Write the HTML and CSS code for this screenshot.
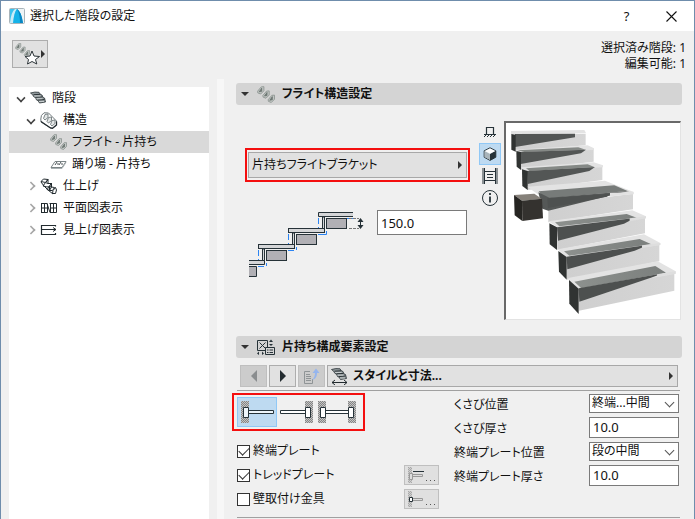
FILE: index.html
```html
<!DOCTYPE html>
<html lang="ja">
<head>
    <meta charset="UTF-8">
    <meta name="viewport" content="width=device-width, initial-scale=1.0">
    <title>選択した階段の設定</title>
    <link rel="stylesheet" href="styles.css">
</head>
<body>
    <!-- 共通アイコン -->
    <svg class="defs" width="0" height="0" aria-hidden="true">
        <defs>
            <pattern id="wall" width="2" height="2" patternUnits="userSpaceOnUse">
                <rect width="2" height="2" fill="#c4c4c4"/>
                <path d="M0 1H1V2H0zM1 0H2V1H1z" fill="#858585"/>
            </pattern>
            <symbol id="flight" viewBox="0 0 17 16">
                <g fill="#c3c8c5" stroke="#8b9390" stroke-width=".8">
                    <path d="M.5 5L4 .8 6.500 .6 6.500 4.500 3.500 7.500 .8 6.500z"/>
                    <path d="M5.500 9L9 4.800 11.500 4.600 11.500 8.500 8.500 11.500 5.800 10.500z"/>
                    <path d="M10.500 13L14 8.800 16.500 8.600 16.500 12.500 13.500 15.500 10.800 14.500z"/>
                </g>
                <path d="M2 5.500L4.500 2V5zM7 9.500L9.500 6V9zM12 13.500L14.500 10V13z" fill="#77817d" stroke="#5d6763" stroke-width=".6"/>
            </symbol>
            <symbol id="stairs" viewBox="0 0 16 12">
                <path d="M.5 1.500Q5 0 9 .8L10.500 3 12 3.500 13 6 14.500 6.500 15.500 10.500 9.500 11.500 8 9 6.500 8.500 5.500 6 4 5.500Q3 3 .5 1.500z" fill="#90989b" stroke="#2b3337" stroke-width=".8"/>
                <path d="M3.500 3.200L10.300 2.800M5.500 5.800L12.500 5.400M7.800 8.600L14.500 8" stroke="#2b3337"/>
                <path d="M4.200 4.500H10.500M6.500 7.200H12.500M9 10H14" stroke="#d5dada" stroke-width=".8"/>
            </symbol>
        </defs>
    </svg>

    <div class="window">
        <header class="titlebar">
            <svg class="app-icon" width="16" height="16" viewBox="0 0 16 16">
                <rect x=".5" y=".5" width="15" height="15" rx="1" fill="#eef4f6" stroke="#a9b4ba"/>
                <path d="M1 1H9Q5 6 4 15H1z" fill="#3cc3ee"/>
                <path d="M1 15Q2 4 6 1H8Q5 6 4.500 15z" fill="#c9ecf8"/>
                <path d="M4 15Q5 4 8 1Q12 3 14 15z" fill="#14b2e8"/>
                <path d="M8 1Q12 3 14 15H11Q11 6 8 1z" fill="#0a86c2"/>
            </svg>
            <h1>選択した階段の設定</h1>
            <button type="button" class="win-btn" aria-label="ヘルプ">?</button>
            <button type="button" class="win-btn" aria-label="閉じる">
                <svg width="11" height="11" viewBox="0 0 11 11"><path d="M.5 .5L10.500 10.500M10.500 .5L.5 10.500" stroke="#111" stroke-width="1.100"/></svg>
            </button>
        </header>

        <div class="toolbar">
            <button type="button" class="favorite" aria-label="お気に入り">
                <svg width="32" height="24" viewBox="0 0 32 24">
                    <use href="#flight" x="1" y="1" width="15" height="14"/>
                    <path d="M18 9L20 14 25.500 14.500 21.500 17.500 22.800 22 18 19.500 13.500 22 14.500 17.500 11 14.500 16 14z" fill="#fff" stroke="#2b3337"/>
                    <path d="M27 8V16L31 12z" fill="#333"/>
                </svg>
            </button>
            <div class="counts">
                <div>選択済み階段: 1</div>
                <div>編集可能: 1</div>
            </div>
        </div>

        <div class="content">
            <nav class="sidebar">
                <ul class="tree">
                    <li class="level-1">
                        <span class="chevron open"></span>
                        <svg class="icon" width="17" height="14"><use href="#stairs" width="16" height="13"/></svg>
                        階段
                    </li>
                    <li class="level-2">
                        <span class="chevron open"></span>
                        <svg class="icon" width="18" height="17" viewBox="0 0 18 17">
                            <path d="M.8 7Q.5 3 4 .8L8.500 1 16.500 9V13L12.500 16.300 10.500 16 1 10z" fill="#fff" stroke="#6f787b"/>
                            <path d="M1 9.500L10.500 16 12.500 16.300 16.500 13V9.500" fill="none" stroke="#222b2f" stroke-width="1.300"/>
                            <path d="M3.500 6.500L5 2.500 8 2 8 5.500 5 8zM7 9.500L8.500 5.500 11.500 5 11.500 8.500 8.500 11zM10.500 12.500L12 8.500 15 8 15 11.500 12 14z" fill="#e4e7e7" stroke="#707a7d" stroke-width=".9"/>
                        </svg>
                        構造
                    </li>
                    <li class="level-3 selected">
                        <svg class="icon" width="17" height="16"><use href="#flight" width="17" height="16"/></svg>
                        フライト - 片持ち
                    </li>
                    <li class="level-3">
                        <svg class="icon" width="17" height="16" viewBox="0 0 17 16">
                            <path d="M1 11.500L5 5.500H16L12 11.500z" fill="#fff" stroke="#7b8486"/>
                            <path d="M5 9L7 6M9 9L11 6M7 8H9M11 8H13" stroke="#4c5558" fill="none"/>
                            <path d="M1 12.500H12L16 6.500" stroke="#aab1b3" fill="none"/>
                        </svg>
                        踊り場 - 片持ち
                    </li>
                    <li class="level-2">
                        <span class="chevron"></span>
                        <svg class="icon" width="18" height="17" viewBox="0 0 18 17">
                            <g fill="#fff" stroke="#222b2f">
                                <path d="M1 3.500L3.500 1 8 1.500 5.500 4.500zM5.500 4.500L8 1.500V5.500L5.500 8.500z"/>
                                <path d="M3 8L5.500 4.500 8 5.500 11 5.500 9.500 8.500 7 9z"/>
                                <path d="M9.500 8.500L11.500 5V9L9.500 12.500zM7 11.500L9.500 8.500 11.500 9 14.500 9.500 12.500 12.500 9.500 12.500z"/>
                                <path d="M13 12.500L15.500 9.500 16.500 12 15.500 15.500 12.500 15.500z"/>
                            </g>
                            <path d="M1 4L4 8M4 8L8 12M8 12L13 16" stroke="#222b2f"/>
                        </svg>
                        仕上げ
                    </li>
                    <li class="level-2">
                        <span class="chevron"></span>
                        <svg class="icon" width="18" height="16" viewBox="0 0 18 16">
                            <path d="M1.500 3V13M4.500 3V13M1 3.500H7L10 12.500H16.500V3.500H9.500M1 12.500H7.500V3.500M10.500 3V12M13.500 3V13M1 8H8M10 8H17" fill="none" stroke="#222b2f"/>
                        </svg>
                        平面図表示
                    </li>
                    <li class="level-2">
                        <span class="chevron"></span>
                        <svg class="icon" width="18" height="16" viewBox="0 0 18 16">
                            <path d="M16 3.500H1.500V12.500H16M1 7.500H16M15.500 3V4.500M15.500 11V13" fill="none" stroke="#222b2f" stroke-width="1.200"/>
                            <path d="M13 5.500L16 7.500 13 9.500" fill="none" stroke="#222b2f"/>
                        </svg>
                        見上げ図表示
                    </li>
                </ul>
            </nav>
            <div class="splitter"></div>

            <main class="settings">
                <h2 class="section-head">
                    <span class="collapse"></span>
                    <svg class="icon" width="18" height="17"><use href="#flight" width="18" height="17"/></svg>
                    フライト構造設定
                </h2>

                <div class="structure">
                    <div class="structure-form">
                        <div class="highlight bracket">
                            <button type="button" class="popup">片持ちフライトブラケット<span class="arrow"></span></button>
                        </div>
                        <div class="thickness">
                            <svg width="116" height="68" viewBox="0 0 116 68">
                                <g fill="none" stroke="#2c84f2" stroke-dasharray="6 3">
                                    <path d="M69.500 6V20M75 22.500H77.500V18M39.500 22V36M9.500 38V52M98 6.500H104"/>
                                    <path d="M69 22.500H77M39 38.500H47.500V35M9 54.500H17.500V51"/>
                                </g>
                                <g fill="#b1b0b5" stroke="#263238">
                                    <rect x="77.500" y="6.500" width="20" height="10"/>
                                    <rect x="47.500" y="22.500" width="20" height="10"/>
                                    <rect x="17.500" y="38.500" width="20" height="10"/>
                                    <path d="M0 54.500H7.500V64.500H0"/>
                                </g>
                                <g fill="#d5d6d8" stroke="#263238">
                                    <path d="M73.500 5V17H75.500V5zM43.500 21V33H45.500V21zM13.500 37V49H15.500V37z"/>
                                    <path d="M104 .5H69.500V4.500H104"/>
                                    <rect x="39.500" y="16.500" width="36" height="4"/>
                                    <rect x="9.500" y="32.500" width="36" height="4"/>
                                    <path d="M0 48.500H15.500V52.500H0"/>
                                </g>
                                <path d="M100 6.500H110M100 16.500H110" stroke="#777" stroke-dasharray="3 1"/>
                                <path d="M111.500 7V16" stroke="#263238"/>
                                <path d="M108.500 10L111.500 6 114.500 10zM108.500 13L111.500 17 114.500 13z" fill="#263238"/>
                            </svg>
                            <input type="text" class="field" value="150.0" aria-label="厚さ">
                        </div>
                    </div>

                    <div class="view-tools">
                        <button type="button" aria-label="側面">
                            <svg width="14" height="14" viewBox="0 0 14 14"><path d="M1 9.500H13M3.500 9V2.500H10.500V9" fill="none" stroke="#263238" stroke-width="1.200"/><path d="M1 12L3 10M4 12L6 10M7 12L9 10M10 12L12 10" stroke="#263238"/></svg>
                        </button>
                        <button type="button" class="active" aria-label="3D">
                            <svg width="14" height="14" viewBox="0 0 14 14"><path d="M7 .8L12.800 3.800V10.200L7 13.400 1.200 10.200V3.800z" fill="#d9e0e4" stroke="#263238"/><path d="M7 7L12.800 3.800V10.200L7 13.400z" fill="#263238"/><path d="M1.500 4L7 7V13L1.500 10z" fill="#a9b4ba"/><path d="M2 4L7 1.500 12 4 7 6.500z" fill="#fff"/></svg>
                        </button>
                        <button type="button" aria-label="寸法">
                            <svg width="16" height="16" viewBox="0 0 16 16"><path d="M1 .5V15.500M15 .5V15.500" stroke="#263238" stroke-width="2" stroke-dasharray="1 1"/><path d="M2.500 0V16M13.500 0V16M2 3.500H14M2 12.500H14M5 6.500H11M5 9.500H11" stroke="#263238"/></svg>
                        </button>
                        <button type="button" aria-label="情報">
                            <svg width="18" height="18" viewBox="0 0 18 18"><circle cx="9" cy="9" r="7.500" fill="none" stroke="#263238"/><path d="M9 7.500V13.500M9 4V6" stroke="#263238" stroke-width="1.800"/></svg>
                        </button>
                    </div>

                    <div class="preview">
                        <svg viewBox="108 39 519 588" role="img" aria-label="階段の3Dプレビュー">
                            <defs>
                                <linearGradient id="riser"><stop offset="0" stop-color="#cfcfcf"/><stop offset="1" stop-color="#d6d6d6"/></linearGradient>
                                <linearGradient id="glass"><stop offset="0" stop-color="#8d918e"/><stop offset="1" stop-color="#7b7f7d"/></linearGradient>
                            </defs>
                            <!-- 段 1 -->
                            <path d="M133 68L344 68V103L133 122z" fill="url(#riser)"/>
                            <path d="M120 60L340 57 345 66 120 69z" fill="#e3e3e3"/>
                            <path d="M132 69L312 68V79L132 108z" fill="#535655"/>
                            <path d="M121 69L134 71V122L121 116z" fill="#303332"/>
                            <!-- 段 2 -->
                            <path d="M150 119L368 115V152L150 177z" fill="url(#riser)"/>
                            <path d="M134 116L350 103 369 112 369 117 140 123z" fill="#e3e3e3"/>
                            <path d="M140 118L322 109 344 116 160 123z" fill="#858986"/>
                            <path d="M148 123L345 116 330 127 149 159z" fill="#535655"/>
                            <path d="M136 120L150 123V177L137 167z" fill="#303332"/>
                            <!-- 段 3 -->
                            <path d="M168 176L394 166V207L168 237z" fill="url(#riser)"/>
                            <path d="M150 169L368 154 396 163 396 169 160 181z" fill="#e3e3e3"/>
                            <path d="M165 172L350 160 370 168 176 180z" fill="#858986"/>
                            <path d="M168 180L372 168 355 180 170 219z" fill="#535655"/>
                            <path d="M153 175L170 180V237L154 225z" fill="#303332"/>
                            <!-- 踊り場 -->
                            <path d="M232 280L486 248V295L232 334z" fill="url(#riser)"/>
                            <path d="M169 227L402 209 488 243 488 250 228 269z" fill="#e3e3e3"/>
                            <path d="M203 241L430 223 470 240 219 263z" fill="#777b79"/>
                            <path d="M202 244L235 260 475 240 415 254 232 299 214 293z" fill="#555857"/>
                            <path d="M229 262L414 249 408 257 231 291z" fill="#4e5150"/>
                            <path d="M417 246L487 242V249L417 256z" fill="#e2e2e2"/>
                            <path d="M129 252L190 248 213 264 153 269z" fill="#86817a"/>
                            <path d="M129 252L153 269 154 330 131 313z" fill="#262522"/>
                            <path d="M153 269L213 263 216 322 154 330z" fill="#34322f"/>
                            <!-- 段 5 -->
                            <path d="M258 349L522 319V367L259 417z" fill="url(#riser)"/>
                            <path d="M232 331L484 298 525 316 525 322 260 349z" fill="#e3e3e3"/>
                            <path d="M252 334L467 309 497 320 265 346z" fill="url(#glass)"/>
                            <path d="M258 349L491 321 459 338 261 389z" fill="#4d504f"/>
                            <path d="M235 337L258 349V417L236 400z" fill="#303332"/>
                            <path d="M476 322L525 316V322L476 331z" fill="#dedede"/>
                            <!-- 段 6 -->
                            <path d="M287 440L565 399V451L288 506z" fill="url(#riser)"/>
                            <path d="M260 415L519 370 568 396 568 402 289 440z" fill="#e3e3e3"/>
                            <path d="M279 421L506 384 541 400 295 434z" fill="url(#glass)"/>
                            <path d="M287 437L533 401 491 419 289 475z" fill="#4d504f"/>
                            <path d="M262 420L287 438V506L264 482z" fill="#303332"/>
                            <path d="M513 403L568 396V402L513 411z" fill="#dedede"/>
                            <!-- 段 7 -->
                            <path d="M323 541L610 486V539L324 599z" fill="url(#riser)"/>
                            <path d="M291 501L560 451 614 481 614 488 323 540z" fill="#e3e3e3"/>
                            <path d="M310 512L553 465 585 485 331 532z" fill="url(#glass)"/>
                            <path d="M323 532L577 487 544 499 325 572z" fill="#4d504f"/>
                            <path d="M294 507L323 533V609L295 578z" fill="#303332"/>
                            <path d="M558 490L614 481V488L558 497z" fill="#dedede"/>
                        </svg>
                    </div>
                </div>

                <h2 class="section-head">
                    <span class="collapse"></span>
                    <svg class="icon" width="18" height="17" viewBox="0 0 18 17">
                        <path d="M.5 1.500H10.500V11.500H.5zM2.500 3.500L8.500 9.500M8.500 3.500L2.500 9.500" fill="none" stroke="#263238"/>
                        <path d="M8.500 8.500H17.500V15.500H8.500z" fill="#d4d4d4" stroke="#263238"/>
                        <path d="M10 11H11.500M12.500 11H16M10 13.500H11.500M12.500 13.500H16" stroke="#263238"/>
                        <path d="M12 3L14 .5 16 3zM12 5L14 7 16 5zM2 12.500L0 14.500 2 16zM5 12.500L7 14.500 5 16z" fill="#263238"/>
                    </svg>
                    片持ち構成要素設定
                </h2>

                <div class="pager">
                    <button type="button" class="page-btn" disabled aria-label="前へ"><svg width="8" height="12" viewBox="0 0 8 12"><path d="M7 0V12L1 6z" fill="#8a8d8f"/></svg></button>
                    <button type="button" class="page-btn" aria-label="次へ"><svg width="8" height="12" viewBox="0 0 8 12"><path d="M1 0V12L7 6z" fill="#222b2f"/></svg></button>
                    <button type="button" class="page-btn" disabled aria-label="転送">
                        <svg width="17" height="16" viewBox="0 0 17 16"><path d="M7 3.500H1.500V15.500H9.500V11M3 6.500H7M3 8.500H8M3 10.500H8M3 12.500H8" fill="none" stroke="#8f9496"/><path d="M9 12C13 11 14 8 14 5H16.500L13 .5 9.500 5H12C12 8 11 10 9 12z" fill="#95b5ee"/></svg>
                    </button>
                    <button type="button" class="popup style-popup">
                        <svg width="17" height="17" viewBox="0 0 17 17"><use href="#stairs" width="16" height="12"/><path d="M1 14.500H16M4 12L1 14.500 4 17M13 12L16 14.500 13 17" fill="none" stroke="#222b2f"/></svg>
                        スタイルと寸法...<span class="arrow"></span>
                    </button>
                </div>

                <div class="details">
                    <div class="details-left">
                        <div class="highlight placement">
                            <button type="button" class="active" aria-label="始端">
                                <svg width="38" height="28" viewBox="0 0 38 28"><path d="M3 3H11V9H3zM3 19H11V25H3zM3 9H5V19H3z" fill="url(#wall)"/><path d="M5.500 9.500H10.500V19.500H5.500zM10.500 12.500H35.500V15.500H10.500z" fill="#eef5fa" stroke="#263238"/></svg>
                            </button>
                            <button type="button" aria-label="終端">
                                <svg width="38" height="28" viewBox="0 0 38 28"><path d="M27 3H35V9H27zM27 19H35V25H27zM33 9H35V19H33z" fill="url(#wall)"/><path d="M27.500 9.500H32.500V19.500H27.500zM2.500 12.500H27.500V15.500H2.500z" fill="#fff" stroke="#263238"/></svg>
                            </button>
                            <button type="button" aria-label="両端">
                                <svg width="38" height="28" viewBox="0 0 38 28"><path d="M0 3H8V9H0zM0 19H8V25H0zM0 9H2V19H0zM30 3H38V9H30zM30 19H38V25H30zM36 9H38V19H36z" fill="url(#wall)"/><path d="M2.500 9.500H7.500V19.500H2.500zM30.500 9.500H35.500V19.500H30.500zM7.500 12.500H30.500V15.500H7.500z" fill="#fff" stroke="#263238"/></svg>
                            </button>
                        </div>
                        <div class="check-row">
                            <input type="checkbox" id="end-plate" checked>
                            <label for="end-plate">終端プレート</label>
                        </div>
                        <div class="check-row">
                            <input type="checkbox" id="tread-plate" checked>
                            <label for="tread-plate">トレッドプレート</label>
                            <button type="button" class="more" disabled aria-label="トレッドプレートの詳細">
                                <svg width="29" height="16" viewBox="0 0 29 16"><path d="M1 0H5V16H1z" fill="url(#wall)" opacity=".6"/><path d="M2.500 6.500H5.500V12.500H2.500zM5.500 7.500H15.500V9.500H5.500z" fill="#ddd" stroke="#999"/><path d="M6 4.500H17" stroke="#263238"/><path d="M19 13.500H20M23 13.500H24M27 13.500H28" stroke="#555"/></svg>
                            </button>
                        </div>
                        <div class="check-row">
                            <input type="checkbox" id="wall-fitting">
                            <label for="wall-fitting">壁取付け金具</label>
                            <button type="button" class="more" disabled aria-label="壁取付け金具の詳細">
                                <svg width="29" height="16" viewBox="0 0 29 16"><path d="M1 0H5V16H1z" fill="url(#wall)" opacity=".6"/><path d="M5.500 7.500H15.500V9.500H5.500z" fill="#ddd" stroke="#999"/><path d="M2.500 6.500H5.500V10.500H2.500z" fill="#fff" stroke="#263238"/><path d="M19 13.500H20M23 13.500H24M27 13.500H28" stroke="#555"/></svg>
                            </button>
                        </div>
                    </div>

                    <div class="fields">
                        <label for="wedge-pos">くさび位置</label>
                        <div class="select"><select id="wedge-pos"><option>終端...中間</option></select></div>
                        <label for="wedge-thick">くさび厚さ</label>
                        <input type="text" class="field" id="wedge-thick" value="10.0">
                        <label for="plate-pos">終端プレート位置</label>
                        <div class="select"><select id="plate-pos"><option>段の中間</option></select></div>
                        <label for="plate-thick">終端プレート厚さ</label>
                        <input type="text" class="field" id="plate-thick" value="10.0">
                    </div>
                </div>
            </main>
        </div>
    </div>
</body>
</html>
```
FILE: styles.css
```css
* {
    box-sizing: border-box;
}
body {
    margin: 0;
    font-family: "Noto Sans", "Noto Sans CJK JP", sans-serif;
    font-size: 12px;
    line-height: 16px;
    font-feature-settings: "palt";
    color: #111;
}
button,
input,
select {
    font: inherit;
    font-feature-settings: inherit;
    color: inherit;
    margin: 0;
    padding: 0;
    border-radius: 0;
}
svg {
    display: block;
    flex: none;
}
.defs {
    position: absolute;
}
.window {
    display: flex;
    flex-direction: column;
    min-height: 100vh;
    border: 1px solid #6f8dac;
    border-bottom: 0;
    background-color: #f0f0f0;
}

/* タイトルバー */
.titlebar {
    display: flex;
    align-items: center;
    height: 30px;
    padding-left: 8px;
    background-color: #fff;
}
.titlebar h1 {
    flex: 1;
    margin: 0 0 0 5px;
    font-size: 12px;
    font-weight: normal;
}
.win-btn {
    display: flex;
    align-items: center;
    justify-content: center;
    width: 45px;
    height: 30px;
    border: none;
    background: none;
    font-size: 13px;
}

.toolbar {
    display: flex;
    justify-content: space-between;
    align-items: flex-start;
    height: 48px;
    padding: 9px 8px 0 11px;
}
.favorite {
    display: flex;
    align-items: center;
    width: 36px;
    height: 28px;
    padding-left: 1px;
    border: 1px solid #adadad;
    background-color: #e1e1e1;
}
.counts {
    text-align: right;
}

.content {
    display: flex;
    flex: 1;
}

/* ツリー */
.sidebar {
    flex: none;
    width: 200px;
    margin: 8px 8px 0;
    background-color: #fff;
}
.tree {
    margin: 0;
    padding: 0;
    list-style: none;
}
.tree li {
    display: flex;
    align-items: center;
    height: 22px;
}
.tree .icon {
    margin-right: 5px;
}
.tree .level-1 {
    padding-left: 7px;
}
.tree .level-2 {
    padding-left: 17px;
}
.tree .level-3 {
    padding-left: 41px;
}
.tree .selected {
    background-color: #d9d9d9;
}
.chevron {
    display: flex;
    align-items: center;
    justify-content: center;
    width: 9px;
    height: 9px;
    margin-right: 5px;
}
.chevron::before {
    content: "";
    width: 6px;
    height: 6px;
    border: solid #a6a6a6;
    border-width: 2px 2px 0 0;
    transform: rotate(45deg) scale(0.8);
}
.chevron.open::before {
    border-color: #444;
    transform: rotate(135deg) scale(0.8);
}
.splitter {
    flex: none;
    width: 7px;
    background-color: #f7f7f7;
}

/* 設定パネル */
.settings {
    flex: 1;
    padding: 4px 12px 0 8px;
}
.section-head {
    display: flex;
    align-items: center;
    height: 22px;
    margin: 0 0 0 4px;
    padding-left: 5px;
    border-radius: 3px;
    background-color: #d4d4d4;
    font-size: 12px;
    font-weight: bold;
}
.section-head .icon {
    margin: 0 7px 0 8px;
}
.collapse {
    border: 4px solid transparent;
    border-top-color: #333;
    border-bottom: 0;
}
.structure {
    display: flex;
    padding: 16px 1px 16px 13px;
}
.structure-form {
    flex: 1;
    padding-top: 27px;
}
.highlight {
    border: 2px solid #f40f0f;
}
.bracket {
    padding: 2px 1px;
}
.popup {
    display: flex;
    align-items: center;
    width: 100%;
    height: 26px;
    padding: 0 4px 0 3px;
    border: 1px solid #a8a8a8;
    background-color: #e1e1e1;
}
.arrow {
    margin-left: auto;
    border: 4px solid transparent;
    border-left-color: #333;
    border-right: 0;
}
.thickness {
    display: flex;
    justify-content: space-between;
    margin-top: 28px;
    padding: 0 3px 0 4px;
}
.thickness svg {
    margin-top: 2px;
}
.field {
    width: 90px;
    height: 21px;
    padding: 0 3px;
    border: 1px solid #7a7a7a;
    background-color: #fff;
    font-size: 13px;
}
.thickness .field {
    height: 25px;
}
.view-tools {
    display: flex;
    flex-direction: column;
    width: 22px;
    margin: 0 3px 0 9px;
}
.view-tools button,
.placement button {
    display: flex;
    align-items: center;
    justify-content: center;
    border: 1px solid transparent;
    background: none;
}
.view-tools button {
    height: 22px;
}
.view-tools .active,
.placement .active {
    border-color: #90c8f6;
    background-color: #bedaf1;
}
.preview {
    width: 177px;
    height: 199px;
    padding: 1px;
    border: 1px solid #e3e3e3;
    border-top: 2px solid #696969;
    border-left: 2px solid #696969;
    background-color: #fff;
}
.preview svg {
    width: 173px;
    height: 196px;
}

.pager {
    display: flex;
    gap: 2px;
    margin: 0 2px 0 5px;
    padding: 7px 2px 3px 3px;
    border-bottom: 1px solid #a0a0a0;
}
.page-btn {
    display: flex;
    align-items: center;
    justify-content: center;
    width: 27px;
    height: 22px;
    border: 1px solid #adadad;
    background-color: #e1e1e1;
}
.page-btn:disabled {
    border-color: #bfbfbf;
    background-color: #ccc;
}
.style-popup {
    flex: 1;
    height: 22px;
    font-weight: bold;
}
.style-popup svg {
    margin-right: 5px;
}

.details {
    display: flex;
    padding-right: 3px;
}
.details-left {
    flex: 1;
    padding: 2px 0 6px;
}
.placement {
    display: flex;
    width: 133px;
    height: 38px;
    margin-bottom: 8px;
    padding: 2px 3px;
}
.placement button {
    width: 40px;
    height: 30px;
}
.check-row {
    display: flex;
    align-items: center;
    height: 24px;
    padding: 0 15px 0 5px;
}
.check-row label {
    margin-left: 3px;
}
.check-row input {
    display: flex;
    align-items: center;
    justify-content: center;
    width: 13px;
    height: 13px;
    border: 1px solid #333;
    background-color: #fff;
    appearance: none;
}
.check-row input:checked::after {
    content: "";
    width: 9px;
    height: 5px;
    margin-bottom: 3px;
    border: solid #333;
    border-width: 0 0 1px 1px;
    transform: rotate(-45deg);
}
.more {
    display: flex;
    align-items: center;
    width: 35px;
    height: 20px;
    margin-left: auto;
    padding-left: 2px;
    border: 1px solid #bfbfbf;
    background-color: #e0e0e0;
}
.fields {
    display: grid;
    grid-template-columns: 135px 90px;
    grid-auto-rows: 24px;
    align-items: center;
    align-content: start;
}
.fields label {
    padding-top: 4px;
}
.select {
    position: relative;
}
.select select {
    display: block;
    width: 90px;
    height: 19px;
    padding: 0 2px;
    border: 1px solid #7a7a7a;
    background-color: #fff;
    line-height: 16px;
    appearance: none;
}
.select::after {
    content: "";
    position: absolute;
    top: 5px;
    right: 6px;
    width: 6px;
    height: 6px;
    border: solid #555;
    border-width: 0 1px 1px 0;
    transform: rotate(45deg);
    pointer-events: none;
}
.details::after {
    content: "";
    align-self: flex-end;
    order: 1;
}
.settings::after {
    content: "";
    display: block;
    margin: 0 2px 0 5px;
    border-bottom: 1px solid #a0a0a0;
}
```
